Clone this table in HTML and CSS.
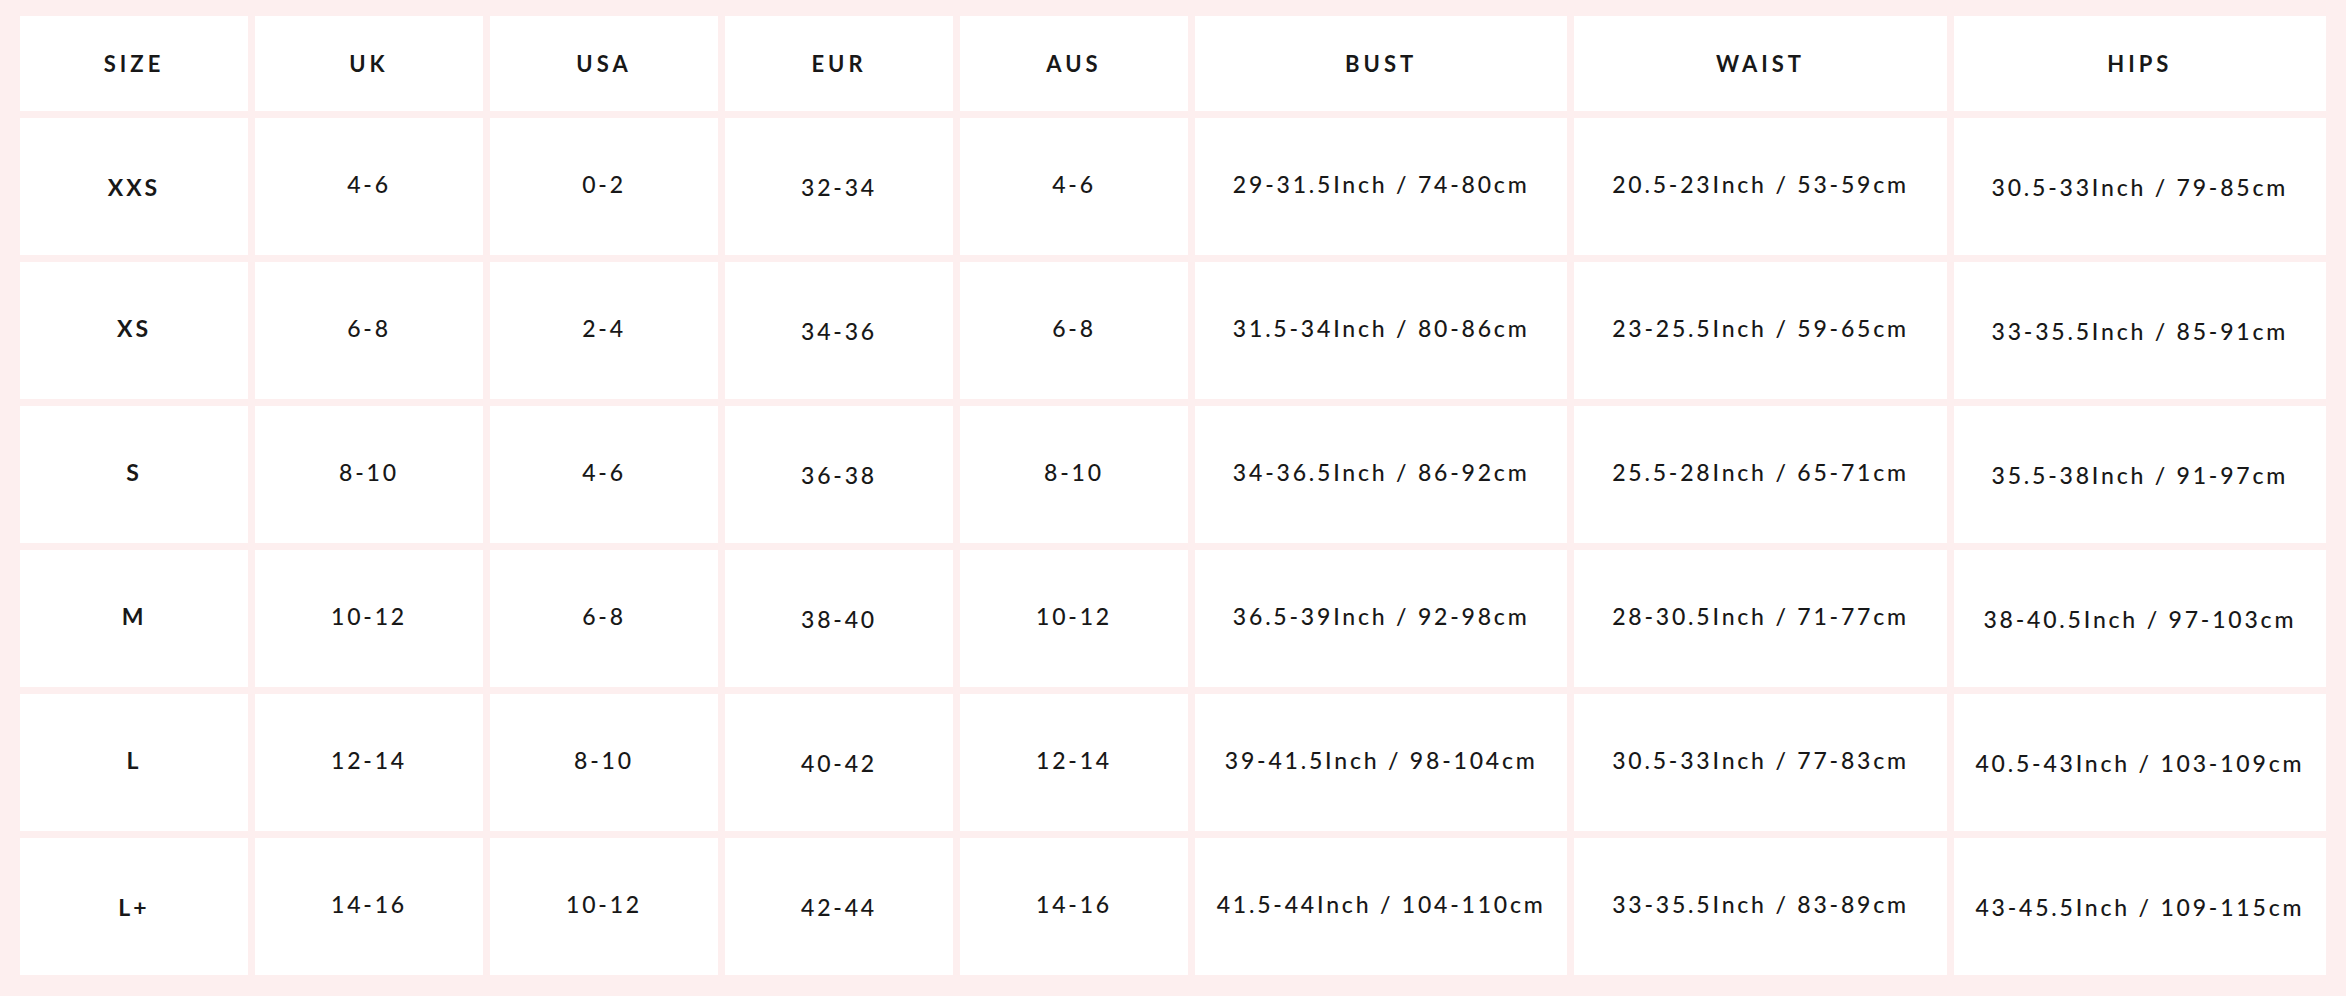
FILE: index.html
```html
<!DOCTYPE html>
<html lang="en">
<head>
<meta charset="utf-8">
<title>Size Chart</title>
<link rel="stylesheet" href="styles.css">
</head>
<body>
<div class="chart">
  <div class="cell head">SIZE</div>
  <div class="cell head">UK</div>
  <div class="cell head">USA</div>
  <div class="cell head">EUR</div>
  <div class="cell head">AUS</div>
  <div class="cell head">BUST</div>
  <div class="cell head">WAIST</div>
  <div class="cell head">HIPS</div>

  <div class="cell size low">XXS</div>
  <div class="cell">4-6</div>
  <div class="cell">0-2</div>
  <div class="cell low">32-34</div>
  <div class="cell">4-6</div>
  <div class="cell">29-31.5Inch / 74-80cm</div>
  <div class="cell">20.5-23Inch / 53-59cm</div>
  <div class="cell low">30.5-33Inch / 79-85cm</div>

  <div class="cell size">XS</div>
  <div class="cell">6-8</div>
  <div class="cell">2-4</div>
  <div class="cell low">34-36</div>
  <div class="cell">6-8</div>
  <div class="cell">31.5-34Inch / 80-86cm</div>
  <div class="cell">23-25.5Inch / 59-65cm</div>
  <div class="cell low">33-35.5Inch / 85-91cm</div>

  <div class="cell size">S</div>
  <div class="cell">8-10</div>
  <div class="cell">4-6</div>
  <div class="cell low">36-38</div>
  <div class="cell">8-10</div>
  <div class="cell">34-36.5Inch / 86-92cm</div>
  <div class="cell">25.5-28Inch / 65-71cm</div>
  <div class="cell low">35.5-38Inch / 91-97cm</div>

  <div class="cell size">M</div>
  <div class="cell">10-12</div>
  <div class="cell">6-8</div>
  <div class="cell low">38-40</div>
  <div class="cell">10-12</div>
  <div class="cell">36.5-39Inch / 92-98cm</div>
  <div class="cell">28-30.5Inch / 71-77cm</div>
  <div class="cell low">38-40.5Inch / 97-103cm</div>

  <div class="cell size">L</div>
  <div class="cell">12-14</div>
  <div class="cell">8-10</div>
  <div class="cell low">40-42</div>
  <div class="cell">12-14</div>
  <div class="cell">39-41.5Inch / 98-104cm</div>
  <div class="cell">30.5-33Inch / 77-83cm</div>
  <div class="cell low">40.5-43Inch / 103-109cm</div>

  <div class="cell size low">L+</div>
  <div class="cell">14-16</div>
  <div class="cell">10-12</div>
  <div class="cell low">42-44</div>
  <div class="cell">14-16</div>
  <div class="cell">41.5-44Inch / 104-110cm</div>
  <div class="cell">33-35.5Inch / 83-89cm</div>
  <div class="cell low">43-45.5Inch / 109-115cm</div>
</div>
</body>
</html>
```

FILE: styles.css
```css
* { box-sizing: border-box; }

html, body {
  margin: 0;
  padding: 0;
  background: #fdefef;
}

body {
  width: 2346px;
  height: 996px;
  padding: 16px 20px 20px 20px;
  font-family: "Lato", "Open Sans", sans-serif;
  color: #181818;
}

.chart {
  display: grid;
  grid-template-columns: 228px 228px 228px 228px 228px 1fr 1fr 1fr;
  grid-template-rows: 95px repeat(6, 137px);
  gap: 7px;
}

.cell {
  background: #ffffff;
  display: flex;
  align-items: center;
  justify-content: center;
  font-size: 23px;
  letter-spacing: 2.8px;
  font-weight: 500;
  white-space: nowrap;
  padding-bottom: 5px;
}

.cell.low {
  padding-bottom: 0;
}

.head {
  font-weight: 700;
  font-size: 22px;
  letter-spacing: 4px;
  padding-bottom: 0;
}

.size {
  font-weight: 700;
  letter-spacing: 3px;
}
```
